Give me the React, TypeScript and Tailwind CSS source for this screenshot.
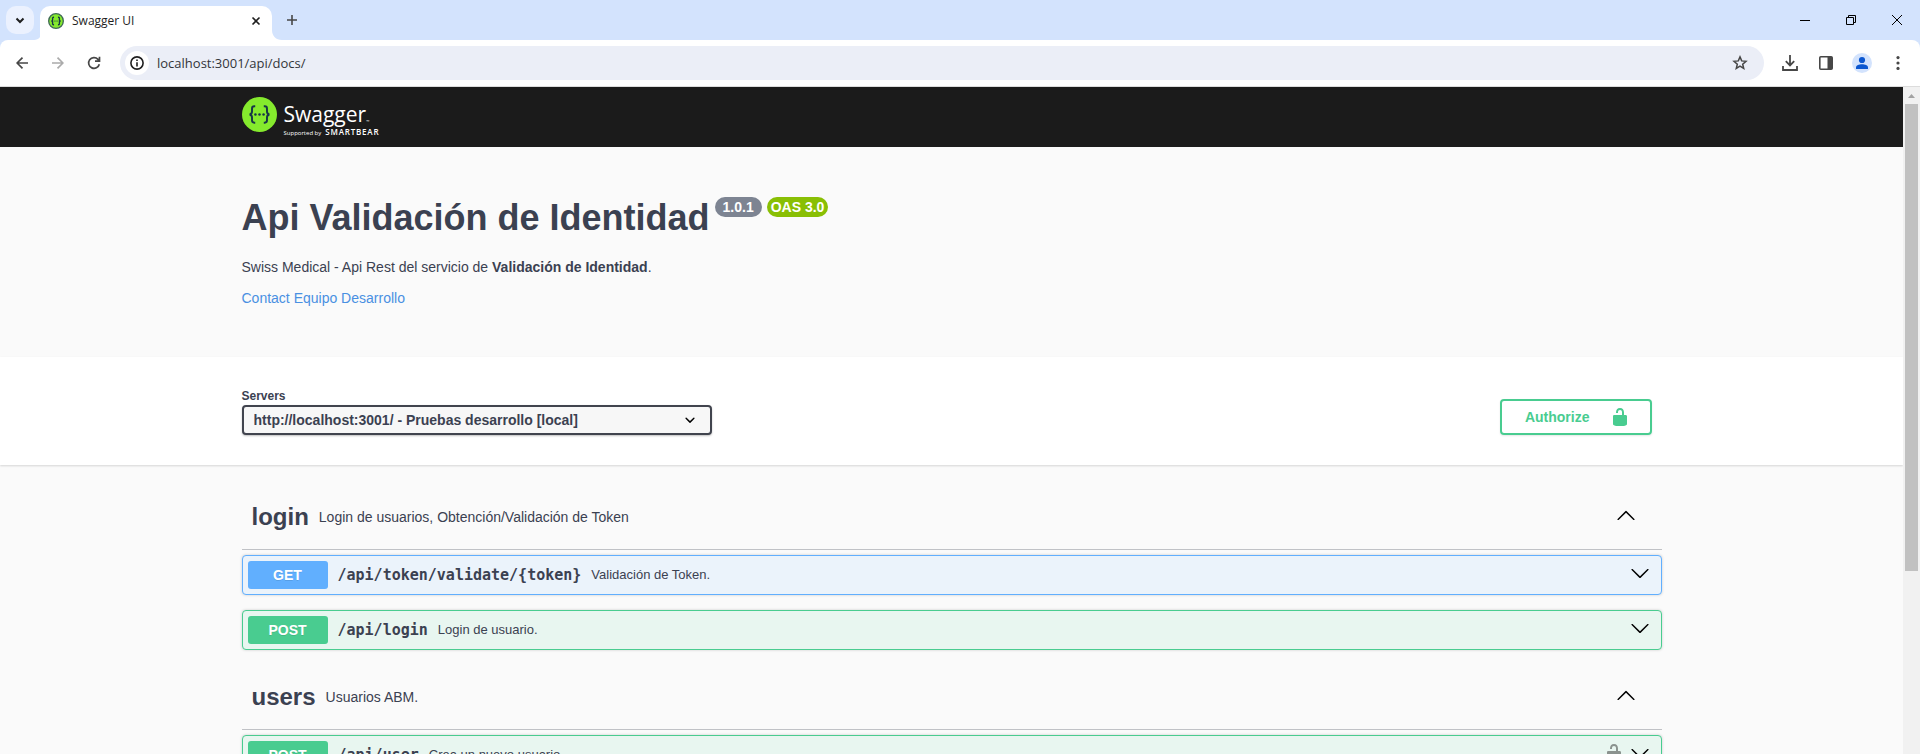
import React from "react";

type Method = "GET" | "POST";
type Operation = { method: Method; path: string; summary: string; locked?: boolean };
type Tag = { name: string; description: string; operations: Operation[] };

const tags: Tag[] = [
  {
    name: "login",
    description: "Login de usuarios, Obtención/Validación de Token",
    operations: [
      { method: "GET", path: "/api/token/validate/{token}", summary: "Validación de Token." },
      { method: "POST", path: "/api/login", summary: "Login de usuario." },
    ],
  },
  {
    name: "users",
    description: "Usuarios ABM.",
    operations: [{ method: "POST", path: "/api/user", summary: "Crea un nuevo usuario.", locked: true }],
  },
];

const methodStyles: Record<Method, { block: string; badge: string }> = {
  GET: { block: "border-[#61affe] bg-[#ebf3fb]", badge: "bg-[#61affe]" },
  POST: { block: "border-[#49cc90] bg-[#e8f6f0]", badge: "bg-[#49cc90]" },
};

function Chevron({ up = false }: { up?: boolean }) {
  return (
    <svg className="size-5" viewBox="0 0 20 20" fill="currentColor" aria-hidden="true">
      {up ? (
        <path d="M17.418 14.908c.272.281.709.281.979 0s.271-.736 0-1.014l-7.908-7.833a.697.697 0 0 0-.979 0L1.602 13.893c-.271.28-.271.735 0 1.014.271.282.709.279.979 0L10 7.751l7.418 7.157z" />
      ) : (
        <path d="M17.418 6.109c.272-.268.709-.268.979 0s.271.701 0 .969l-7.908 7.83c-.27.268-.707.268-.979 0l-7.908-7.83c-.27-.268-.27-.701 0-.969.271-.268.709-.268.979 0L10 13.25l7.418-7.141z" />
      )}
    </svg>
  );
}

function Unlocked() {
  return (
    <svg className="size-5" viewBox="0 0 20 20" fill="currentColor" aria-hidden="true">
      <path d="M15.8 8H14V5.6C14 2.703 12.665 1 10 1 7.334 1 6 2.703 6 5.6V6h2v-.801C8 3.754 8.797 3 10 3c1.203 0 2 .754 2 2.199V8H4c-.553 0-1 .646-1 1.199V17c0 .549.428 1.139.951 1.307l1.197.387C5.672 18.861 6.55 19 7.1 19h5.8c.549 0 1.428-.139 1.951-.307l1.196-.387c.524-.167.953-.757.953-1.306V9.199C17 8.646 16.352 8 15.8 8z" />
    </svg>
  );
}

function SwaggerMark({ className, ring = false }: { className: string; ring?: boolean }) {
  return (
    <svg className={className} viewBox="0 0 36 36" fill="none" stroke="#173647" aria-hidden="true">
      <circle cx="18" cy="18" r={ring ? 16.5 : 18} fill="#85ea2d" stroke={ring ? "#3f6b54" : "none"} strokeWidth="3" />
      <path
        d="M13.6 9.6h-1c-1.700 0-2.300.9-2.300 2.400v3c0 1.700-.8 2.600-2.400 3 1.600.4 2.400 1.300 2.400 3v3c0 1.500.6 2.400 2.300 2.400h1M22.400 9.600h1c1.700 0 2.300.9 2.300 2.400v3c0 1.700.8 2.600 2.400 3-1.600.4-2.400 1.300-2.400 3v3c0 1.500-.6 2.400-2.300 2.400h-1"
        strokeWidth={ring ? 3 : 2}
      />
      <g fill="#173647" stroke="none">
        <circle cx="13.800" cy="18" r="1.300" />
        <circle cx="18" cy="18" r="1.300" />
        <circle cx="22.200" cy="18" r="1.300" />
      </g>
    </svg>
  );
}

function TabStrip() {
  return (
    <div className="flex h-10 shrink-0 items-end bg-[#d3e3fd]">
      <button type="button" aria-label="Search tabs" className="mb-1.5 ml-1.5 flex size-7 items-center justify-center rounded-[10px] bg-[#ebf1fe]">
        <svg className="size-3" viewBox="0 0 12 12" fill="none" stroke="#1f1f1f" strokeWidth="2" aria-hidden="true">
          <path d="M2.500 4.500 6 8l3.500-3.500" />
        </svg>
      </button>
      <svg className="h-2.5 w-2" viewBox="0 0 8 10" fill="#fff" aria-hidden="true">
        <path d="M8 0v10H0c5 0 8-4 8-10z" />
      </svg>
      <div className="ml-[-2px] flex h-[34px] w-[232px] items-center rounded-t-[10px] bg-white pr-2 pb-1 pl-2">
        <SwaggerMark className="size-4" ring />
        <span className="ml-2 grow font-['Open_Sans','Noto_Sans',sans-serif] text-xs text-[#1f1f1f]">Swagger UI</span>
        <button type="button" aria-label="Close tab" className="flex size-4 items-center justify-center">
          <svg className="size-2.5" viewBox="0 0 10 10" fill="none" stroke="#1f1f1f" strokeWidth="1.600" aria-hidden="true">
            <path d="m1.500 1.500 7 7m0-7-7 7" />
          </svg>
        </button>
      </div>
      <svg className="h-2.5 w-2.5" viewBox="0 0 10 10" fill="#fff" aria-hidden="true">
        <path d="M0 0v10h10C4 10 0 6 0 0z" />
      </svg>
      <button type="button" aria-label="New tab" className="mb-2 flex h-6 w-5 items-center justify-center">
        <svg className="size-3" viewBox="0 0 12 12" fill="none" stroke="#474747" strokeWidth="1.600" aria-hidden="true">
          <path d="M6 1v10M1 6h10" />
        </svg>
      </button>
      <div className="mb-2 ml-auto flex text-black">
        <button type="button" aria-label="Minimize" className="flex h-6 w-[46px] items-center justify-center">
          <svg className="size-2.5" viewBox="0 0 10 10" stroke="currentColor" aria-hidden="true">
            <path d="M0 5.500h10" />
          </svg>
        </button>
        <button type="button" aria-label="Restore" className="flex h-6 w-[46px] items-center justify-center">
          <svg className="size-2.5" viewBox="0 0 10 10" fill="none" stroke="currentColor" aria-hidden="true">
            <path d="M.5 2.500h7v7h-7zM2.500 2.500v-2h7v7h-2" />
          </svg>
        </button>
        <button type="button" aria-label="Close" className="flex h-6 w-[46px] items-center justify-center">
          <svg className="size-2.5" viewBox="0 0 10 10" stroke="currentColor" aria-hidden="true">
            <path d="m0 0 10 10M10 0 0 10" />
          </svg>
        </button>
      </div>
    </div>
  );
}

function Toolbar() {
  return (
    <div className="shrink-0 bg-[#d3e3fd]">
      <div className="flex h-[47px] items-center rounded-t-lg border-b border-[#dcdcdc] bg-white pl-3 text-[#474747]">
        <button type="button" aria-label="Back" className="flex size-5 items-center justify-center">
          <svg className="size-3" viewBox="0 0 12 12" fill="none" stroke="currentColor" strokeWidth="1.700" aria-hidden="true">
            <path d="M12 6H1.200M6.500.6 1.100 6l5.400 5.400" />
          </svg>
        </button>
        <button type="button" aria-label="Forward" className="ml-4 flex size-5 items-center justify-center text-[#ababab]">
          <svg className="size-3" viewBox="0 0 12 12" fill="none" stroke="currentColor" strokeWidth="1.700" aria-hidden="true">
            <path d="M0 6h10.800M5.500.6 10.900 6l-5.400 5.400" />
          </svg>
        </button>
        <button type="button" aria-label="Reload" className="ml-4 flex size-5 items-center justify-center">
          <svg className="size-3.5" viewBox="0 0 14 14" fill="none" stroke="currentColor" strokeWidth="1.700" aria-hidden="true">
            <path d="M12.300 8.200A5.400 5.400 0 1 1 11 3.300l1.200 1.300M12.500.8v4.400H8" />
          </svg>
        </button>
        <div className="ml-4 flex h-[34px] grow items-center rounded-full bg-[#ebeef7] pr-4 pl-[5px]">
          <button type="button" aria-label="View site information" className="flex size-6 items-center justify-center rounded-full bg-white text-[#1f1f1f]">
            <svg className="size-3.5" viewBox="0 0 14 14" fill="none" stroke="currentColor" strokeWidth="1.600" aria-hidden="true">
              <circle cx="7" cy="7" r="6.100" />
              <path d="M7 6.200v4.200M7 3.500v1.600" />
            </svg>
          </button>
          <input
            aria-label="Address"
            defaultValue="localhost:3001/api/docs/"
            className="ml-2 h-6 min-w-0 grow bg-transparent font-['Open_Sans','Noto_Sans',sans-serif] text-[13px] leading-6 text-[#33353a] outline-none"
          />
          <button type="button" aria-label="Bookmark this tab" className="flex size-4 items-center justify-center">
            <svg className="size-4" viewBox="0 0 16 16" fill="none" stroke="currentColor" strokeWidth="1.500" aria-hidden="true">
              <path d="m8 1.900 1.700 4 4.300.4-3.300 2.900 1 4.200L8 11.100l-3.700 2.300 1-4.200L2 6.300l4.300-.4z" />
            </svg>
          </button>
        </div>
        <div className="flex items-center gap-4 pr-3 pl-4">
          <button type="button" aria-label="Downloads" className="flex size-5 items-center justify-center">
            <svg className="size-4" viewBox="0 0 16 16" fill="none" stroke="currentColor" strokeWidth="1.800" aria-hidden="true">
              <path d="M8 0v10M3.800 6.200 8 10.400l4.200-4.200M1 11v4h14v-4" />
            </svg>
          </button>
          <button type="button" aria-label="Side panel" className="flex size-5 items-center justify-center">
            <svg className="size-3.5" viewBox="0 0 14 14" aria-hidden="true">
              <rect x=".8" y=".8" width="12.400" height="12.400" rx="1" fill="none" stroke="currentColor" strokeWidth="1.600" />
              <path d="M8.500 1H13v12H8.500z" fill="currentColor" />
            </svg>
          </button>
          <button type="button" aria-label="Profile" className="flex size-5 items-center justify-center rounded-full bg-[#d3e3fd]">
            <svg className="size-3.5" viewBox="0 0 14 14" fill="#0b57d0" aria-hidden="true">
              <circle cx="7" cy="4" r="3.100" />
              <path d="M1 13v-1.500C1 9.500 4 8.300 7 8.300s6 1.200 6 3.200V13z" />
            </svg>
          </button>
          <button type="button" aria-label="Menu" className="flex size-5 items-center justify-center">
            <svg className="h-3.5 w-1" viewBox="0 0 4 14" fill="currentColor" aria-hidden="true">
              <circle cx="2" cy="1.600" r="1.600" />
              <circle cx="2" cy="7" r="1.600" />
              <circle cx="2" cy="12.400" r="1.600" />
            </svg>
          </button>
        </div>
      </div>
    </div>
  );
}

function Wrapper({ className = "", children }: { className?: string; children: React.ReactNode }) {
  return <div className={`mx-auto w-full max-w-[1460px] px-5 ${className}`}>{children}</div>;
}

function Topbar() {
  return (
    <div className="bg-[#1b1b1b] py-2.5">
      <Wrapper>
        <a href="#" aria-label="Swagger" className="flex h-10 w-fit gap-[7px] text-white">
          <SwaggerMark className="size-[35px]" />
          <span className="flex flex-col font-['Open_Sans','Noto_Sans',sans-serif]">
            <span className="flex h-[31px] items-end text-[21px] leading-7">
              Swagger<span className="text-[4px] leading-3">™</span>
            </span>
            <span className="flex items-baseline gap-1 text-[6px] leading-2">
              Supported by <b className="text-[8px] font-semibold tracking-widest">SMARTBEAR</b>
            </span>
          </span>
        </a>
      </Wrapper>
    </div>
  );
}

function Info() {
  return (
    <Wrapper className="pt-[50px] pb-[50px]">
      <div className="flex items-start gap-[5px]">
        <h1 className="text-4xl leading-[42px] font-bold">Api Validación de Identidad</h1>
        <span className="rounded-full bg-[#7d8492] px-2 text-sm leading-5 font-bold text-white">1.0.1</span>
        <span className="rounded-full bg-[#89bf04] px-1 text-sm leading-5 font-bold text-white">OAS 3.0</span>
      </div>
      <p className="mt-[18px] text-sm leading-5">
        Swiss Medical - Api Rest del servicio de <strong>Validación de Identidad</strong>.
      </p>
      <a href="#contact" className="mt-3 block w-fit text-sm leading-[18px] text-[#4990e2]">
        Contact Equipo Desarrollo
      </a>
    </Wrapper>
  );
}

function Servers() {
  return (
    <div className="bg-white shadow-[0_1px_2px_0_rgba(0,0,0,0.15)]">
      <Wrapper className="flex items-end justify-between py-[30px]">
        <div>
          <label htmlFor="servers" className="block text-xs leading-[18px] font-bold">
            Servers
          </label>
          <div className="relative">
            <select
              id="servers"
              className="block h-[30px] w-[470px] appearance-none rounded border-2 border-[#41444e] bg-[#f7f7f7] pr-10 pl-2.5 text-sm font-bold shadow-[0_1px_2px_0_rgba(0,0,0,0.25)]"
            >
              <option>http://localhost:3001/ - Pruebas desarrollo [local]</option>
            </select>
            <svg className="pointer-events-none absolute top-[5px] right-3 size-5" viewBox="0 0 20 20" aria-hidden="true">
              <path d="M13.418 7.859a.695.695 0 0 1 .978 0 .68.680 0 0 1 0 .969l-3.908 3.830a.697.697 0 0 1-.979 0l-3.908-3.830a.680.680 0 0 1 0-.969.695.695 0 0 1 .978 0L10 11l3.418-3.141z" />
            </svg>
          </div>
        </div>
        <button
          type="button"
          className="mr-2.5 flex h-9 items-center rounded border-2 border-[#49cc90] pr-5 pl-[23px] text-sm font-bold text-[#49cc90] shadow-[0_1px_2px_rgba(0,0,0,0.1)]"
        >
          <span className="mr-5">Authorize</span>
          <Unlocked />
        </button>
      </Wrapper>
    </div>
  );
}

function OperationRow({ method, path, summary, locked }: Operation) {
  const style = methodStyles[method];
  return (
    <div className={`flex items-center rounded border p-[5px] shadow-[0_0_3px_rgba(0,0,0,0.19)] ${style.block}`}>
      <button type="button" className="flex min-w-0 grow items-center text-left">
        <span className={`w-20 rounded-[3px] text-center text-sm leading-7 font-bold text-white [text-shadow:0_1px_0_rgba(0,0,0,0.1)] ${style.badge}`}>
          {method}
        </span>
        <span className="px-2.5 font-['DejaVu_Sans_Mono',monospace] text-[15px] leading-5 font-bold">{path}</span>
        <span className="text-[13px] leading-5">{summary}</span>
      </button>
      {locked && (
        <button type="button" aria-label="Authorization" className="mr-1.5 pb-1 text-[#8b938f]">
          <Unlocked />
        </button>
      )}
      <button type="button" aria-label={`Expand ${path}`} className="mr-1.5 pb-1 text-black">
        <Chevron />
      </button>
    </div>
  );
}

function TagSection({ name, description, operations }: Tag) {
  return (
    <section>
      <h2 className="mb-[5px] flex h-[65px] items-center border-b border-[#3b41514d] pr-[26px] pl-2.5">
        <a href={`#${name}`} className="text-2xl leading-8 font-bold">
          {name}
        </a>
        <span className="grow px-2.5 text-sm leading-5">{description}</span>
        <button type="button" aria-label={`Collapse ${name}`} className="pb-1 text-black">
          <Chevron up />
        </button>
      </h2>
      <div className="flex flex-col gap-[15px] pb-[15px]">
        {operations.map((operation) => (
          <OperationRow key={operation.path} {...operation} />
        ))}
      </div>
    </section>
  );
}

function Scrollbar() {
  return (
    <div className="flex w-[17px] shrink-0 flex-col items-center bg-[#f1f1f1]" aria-hidden="true">
      <div className="flex h-[17px] items-center justify-center">
        <svg className="h-1 w-[7px]" viewBox="0 0 7 4" fill="#a3a3a3">
          <path d="M3.500 0 7 4H0z" />
        </svg>
      </div>
      <div className="h-[70%] w-[13px] bg-[#c1c1c1]" />
    </div>
  );
}

export default function App() {
  return (
    <div className="flex h-screen flex-col overflow-hidden font-['Liberation_Sans',Arial,sans-serif] text-[#3b4151]">
      <TabStrip />
      <Toolbar />
      <div className="flex min-h-0 grow">
        <main className="min-w-0 grow overflow-hidden bg-[#fafafa]">
          <Topbar />
          <Info />
          <Servers />
          <Wrapper className="pt-5">
            {tags.map((tag) => (
              <TagSection key={tag.name} {...tag} />
            ))}
          </Wrapper>
        </main>
        <Scrollbar />
      </div>
    </div>
  );
}
